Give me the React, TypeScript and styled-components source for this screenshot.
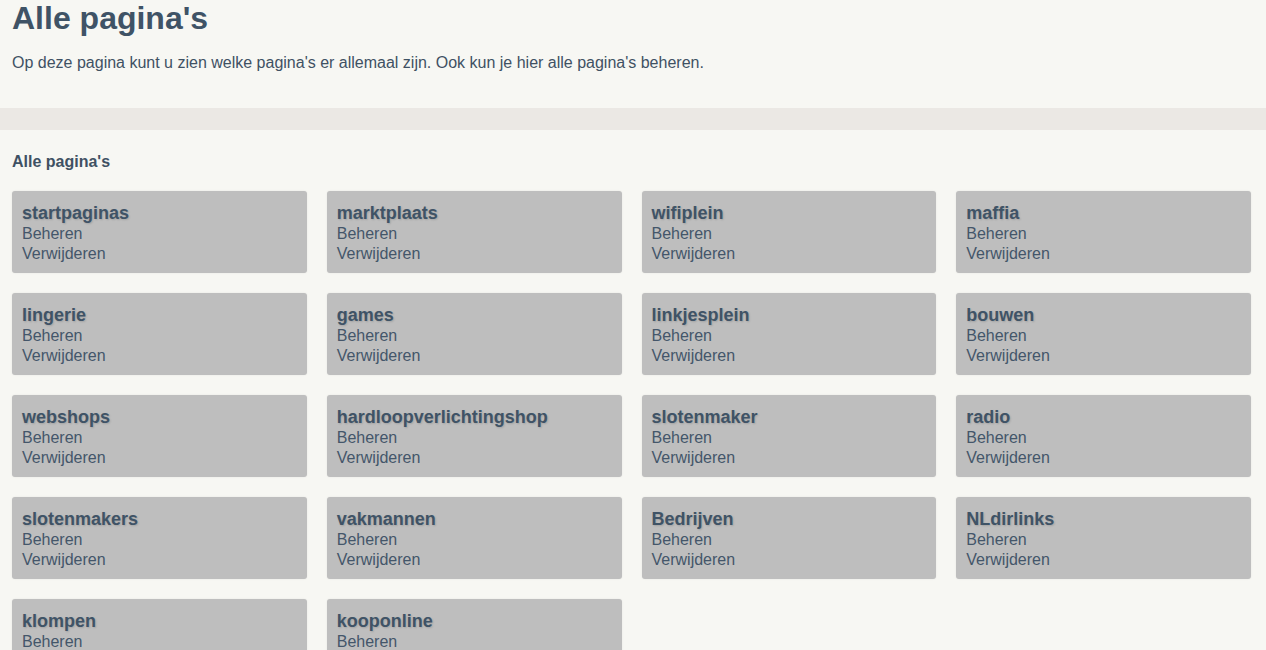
import styled, {createGlobalStyle} from "styled-components"

const GlobalStyle = createGlobalStyle`
    html, body {
        margin: 0;
        padding: 0;
        background: #f7f7f3;
        font-family: "Liberation Sans", Arial, sans-serif;
        color: #3f5163;
    }
`

const pages = [
    "startpaginas", "marktplaats", "wifiplein", "maffia",
    "lingerie", "games", "linkjesplein", "bouwen",
    "webshops", "hardloopverlichtingshop", "slotenmaker", "radio",
    "slotenmakers", "vakmannen", "Bedrijven", "NLdirlinks",
    "klompen", "kooponline",
]

const Header = styled.header`
    padding: 0 12px;
    height: 108px;
    box-sizing: border-box;
`

const Title = styled.h1`
    margin: 0;
    font-size: 32px;
    line-height: 37px;
    font-weight: bold;
    color: #3f5366;
`

const Intro = styled.p`
    margin: 17px 0 0;
    font-size: 16px;
    line-height: 18px;
`

const Band = styled.div`
    height: 22px;
    background: #ebe8e4;
`

const Section = styled.section`
    padding: 23px 15px 20px 12px;
`

const SectionTitle = styled.h2`
    margin: 0 0 20px;
    font-size: 16px;
    line-height: 18px;
    font-weight: bold;
`

const Grid = styled.div`
    display: grid;
    grid-template-columns: repeat(4, 1fr);
    column-gap: 20px;
    row-gap: 20px;
`

const Card = styled.div`
    background: #bebebe;
    border-radius: 3px;
    height: 82px;
    box-sizing: border-box;
    padding: 12px 10px;
    box-shadow: 0 0 2px rgba(0, 0, 0, 0.08);
`

const CardTitle = styled.div`
    font-size: 18px;
    line-height: 21px;
    font-weight: bold;
    color: #3f5366;
    text-shadow: 1px 1px 2px rgba(0, 0, 0, 0.15);
`

const CardLink = styled.div`
    font-size: 16px;
    line-height: 20px;
    color: #44566a;
    cursor: pointer;
`

function App() {
    return (
        <>
            <GlobalStyle/>
            <Header>
                <Title>Alle pagina's</Title>
                <Intro>Op deze pagina kunt u zien welke pagina's er allemaal zijn. Ook kun je hier alle pagina's beheren.</Intro>
            </Header>
            <Band/>
            <Section>
                <SectionTitle>Alle pagina's</SectionTitle>
                <Grid>
                    {pages.map(p => (
                        <Card key={p}>
                            <CardTitle>{p}</CardTitle>
                            <CardLink>Beheren</CardLink>
                            <CardLink>Verwijderen</CardLink>
                        </Card>
                    ))}
                </Grid>
            </Section>
        </>
    )
}

export default App
